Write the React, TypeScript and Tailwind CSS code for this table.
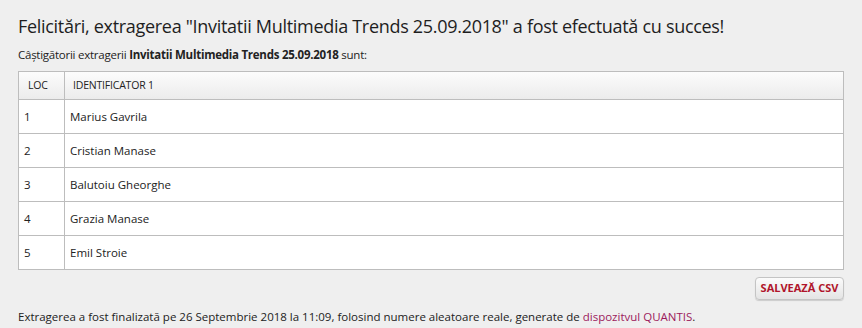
import React from "react";

const rows = [
  { loc: "1", name: "Marius Gavrila" },
  { loc: "2", name: "Cristian Manase" },
  { loc: "3", name: "Balutoiu Gheorghe" },
  { loc: "4", name: "Grazia Manase" },
  { loc: "5", name: "Emil Stroie" },
];

export default function App() {
  return (
    <div
      className="w-[862px] h-[328px] bg-[#efefef] text-[#222] overflow-hidden"
      style={{ fontFamily: '"Open Sans", "Noto Sans", sans-serif' }}
    >
      <div className="pl-[18px] pr-[18px] pt-[13px]">
        <h1 className="text-[18px] leading-[26px] tracking-[-0.3px] text-[#1e1e1e] font-normal">
          Felicitări, extragerea "Invitatii Multimedia Trends 25.09.2018" a fost efectuată cu succes!
        </h1>
        <p className="mt-[8px] text-[11.5px] leading-[16px] tracking-[-0.25px]">
          Câștigătorii extragerii <b className="font-bold">Invitatii Multimedia Trends 25.09.2018</b> sunt:
        </p>
        <table className="mt-[8px] w-[826px] border-collapse border border-[#bdbdbd] text-[11.5px]">
          <thead>
            <tr className="h-[28px] bg-gradient-to-b from-[#fcfcfc] to-[#ebebeb]">
              <th className="w-[46px] border border-[#bdbdbd] text-left font-normal pl-[9px] text-[10.5px] tracking-[-0.2px]">LOC</th>
              <th className="border border-[#bdbdbd] text-left font-normal pl-[8px] text-[10.5px] tracking-[-0.2px]">IDENTIFICATOR 1</th>
            </tr>
          </thead>
          <tbody className="bg-white">
            {rows.map((r) => (
              <tr key={r.loc} className="h-[34px]">
                <td className="border border-[#bdbdbd] pl-[5px]">{r.loc}</td>
                <td className="border border-[#bdbdbd] pl-[5px]">{r.name}</td>
              </tr>
            ))}
          </tbody>
        </table>
        <div className="flex justify-end mt-[7px]">
          <button className="h-[23px] w-[89px] rounded-[4px] border border-[#c4c4c4] bg-gradient-to-b from-[#fbfbfb] to-[#e4e4e4] text-[11px] font-bold text-[#b0142a] shadow-[0_1px_1px_rgba(0,0,0,0.15)]">
            SALVEAZĂ CSV
          </button>
        </div>
        <p className="mt-[9px] text-[11.5px] leading-[16px]">
          Extragerea a fost finalizată pe 26 Septembrie 2018 la 11:09, folosind numere aleatoare reale, generate de{" "}
          <span className="text-[#9c1a5c]">dispozitvul QUANTIS</span>.
        </p>
      </div>
    </div>
  );
}
